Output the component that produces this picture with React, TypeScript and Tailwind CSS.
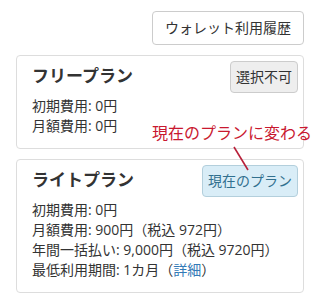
import React from "react";

const font = { fontFamily: '"Open Sans", "Noto Sans CJK JP", sans-serif' };

function Plan({
  title,
  badge,
  current,
  children,
}: {
  title: string;
  badge: string;
  current?: boolean;
  children: React.ReactNode;
}) {
  return (
    <div className="relative rounded-[4px] border border-[#dddddd] bg-white px-[15px] pt-[10px] pb-[12px]">
      <h4 className="text-[17px] leading-[20px] font-bold text-[#333333]">{title}</h4>
      <span
        className={`absolute top-[5px] right-[5px] rounded-[4px] border px-[5px] py-[5px] text-[14px] leading-[20px] ${
          current
            ? "border-[#b3cfdc] bg-[#d9edf7] text-[#31708f]"
            : "border-[#cccccc] bg-[#eeeeee] text-[#333333]"
        }`}
      >
        {badge}
      </span>
      <div className="mt-[10px] text-[14px] leading-[20px] text-[#333333]">{children}</div>
    </div>
  );
}

export default function App() {
  return (
    <div className="min-h-[302px] w-[320px] bg-white px-4 pt-[11px]" style={font}>
      <div className="flex justify-end">
        <button className="rounded-[4px] border border-[#cccccc] bg-white px-[12px] py-[6px] text-[14px] leading-[20px] text-[#333333]">
          ウォレット利用履歴
        </button>
      </div>

      <div className="relative mt-[10px] flex flex-col gap-[10px]">
        <Plan title="フリープラン" badge="選択不可">
          <p>初期費用: 0円</p>
          <p>月額費用: 0円</p>
        </Plan>
        <Plan title="ライトプラン" badge="現在のプラン" current>
          <p>初期費用: 0円</p>
          <p>月額費用: 900円（税込 972円）</p>
          <p>年間一括払い: 9,000円（税込 9720円）</p>
          <p>
            最低利用期間: 1カ月（<a className="text-[#337ab7]">詳細</a>）
          </p>
        </Plan>

        {/* annotation */}
        <span className="absolute top-[68px] left-[136px] text-[16px] leading-[20px] whitespace-nowrap text-[#c9182f]">
          現在のプランに変わる
        </span>
        <svg className="absolute top-[90px] left-[215px]" width="20" height="28" viewBox="0 0 20 28">
          <line x1="3" y1="2" x2="17" y2="25" stroke="#b8203a" strokeWidth="1.6" />
        </svg>
      </div>
    </div>
  );
}
